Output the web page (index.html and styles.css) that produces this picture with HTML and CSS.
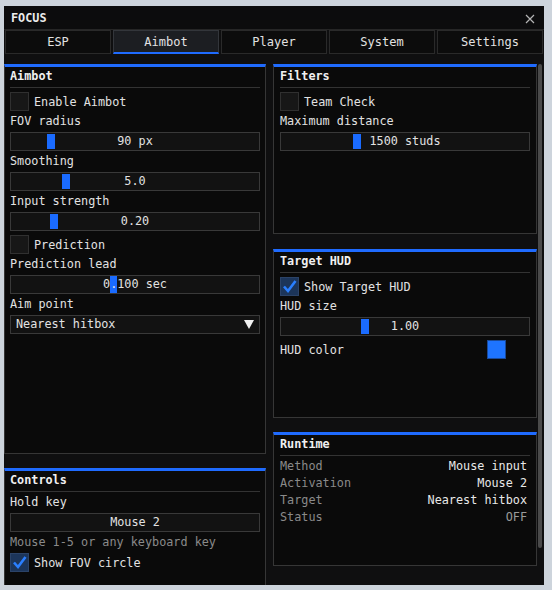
FILE: index.html
```html
<!DOCTYPE html>
<html lang="en">
<head>
  <meta charset="UTF-8">
  <title>FOCUS</title>
  <link rel="stylesheet" href="styles.css">
</head>
<body>
  <div class="window">
    <div class="titlebar">
      <span class="title">FOCUS</span>
      <svg class="close" width="10" height="10" viewBox="0 0 10 10">
        <path d="M1 1 L9 9 M9 1 L1 9" stroke="#b4b4b4" stroke-width="1.2" fill="none"/>
      </svg>
    </div>

    <nav class="tabs">
      <div class="tab">ESP</div>
      <div class="tab active">Aimbot</div>
      <div class="tab">Player</div>
      <div class="tab">System</div>
      <div class="tab">Settings</div>
    </nav>

    <div class="content">
      <div class="column left">
        <section class="panel panel-aimbot">
          <div class="panel-header">Aimbot</div>
          <div class="panel-body">
            <div class="check"><span class="box"></span>Enable Aimbot</div>
            <div class="label">FOV radius</div>
            <div class="frame slider"><span class="grab" style="left: 36px"></span>90 px</div>
            <div class="label">Smoothing</div>
            <div class="frame slider"><span class="grab" style="left: 51px"></span>5.0</div>
            <div class="label">Input strength</div>
            <div class="frame slider"><span class="grab" style="left: 39px"></span>0.20</div>
            <div class="check"><span class="box"></span>Prediction</div>
            <div class="label">Prediction lead</div>
            <div class="frame">0<span class="selected">.</span>100 sec</div>
            <div class="label">Aim point</div>
            <div class="frame combo">
              <span>Nearest hitbox</span>
              <svg width="10" height="9" viewBox="0 0 10 9"><path d="M0 0 H10 L5 9 Z" fill="#f0f0f0"/></svg>
            </div>
          </div>
        </section>

        <section class="panel panel-controls">
          <div class="panel-header">Controls</div>
          <div class="panel-body">
            <div class="label">Hold key</div>
            <div class="frame">Mouse 2</div>
            <div class="hint">Mouse 1-5 or any keyboard key</div>
            <div class="check">
              <span class="box on">
                <svg width="17" height="17" viewBox="0 0 17 17"><path d="M3 8.5 L7 13 L14.5 3" stroke="#2a7fff" stroke-width="2.6" fill="none"/></svg>
              </span>Show FOV circle
            </div>
          </div>
        </section>
      </div>

      <div class="column right">
        <section class="panel panel-filters">
          <div class="panel-header">Filters</div>
          <div class="panel-body">
            <div class="check"><span class="box"></span>Team Check</div>
            <div class="label">Maximum distance</div>
            <div class="frame slider"><span class="grab" style="left: 72px"></span>1500 studs</div>
          </div>
        </section>

        <section class="panel panel-hud">
          <div class="panel-header">Target HUD</div>
          <div class="panel-body">
            <div class="check">
              <span class="box on">
                <svg width="17" height="17" viewBox="0 0 17 17"><path d="M3 8.5 L7 13 L14.5 3" stroke="#2a7fff" stroke-width="2.6" fill="none"/></svg>
              </span>Show Target HUD
            </div>
            <div class="label">HUD size</div>
            <div class="frame slider"><span class="grab" style="left: 80px"></span>1.00</div>
            <div class="color-row">
              <span>HUD color</span>
              <span class="swatch"></span>
            </div>
          </div>
        </section>

        <section class="panel panel-runtime">
          <div class="panel-header">Runtime</div>
          <div class="panel-body runtime">
            <div class="stat"><span class="key">Method</span><span class="value">Mouse input</span></div>
            <div class="stat"><span class="key">Activation</span><span class="value">Mouse 2</span></div>
            <div class="stat"><span class="key">Target</span><span class="value">Nearest hitbox</span></div>
            <div class="stat"><span class="key">Status</span><span class="value off">OFF</span></div>
          </div>
        </section>
      </div>

      <div class="scrollbar"><div class="thumb"></div></div>
    </div>
  </div>
</body>
</html>
```

FILE: styles.css
```css
body {
  margin: 0;
  padding: 6px 0 0 4px;
  background-color: #cdd4dc;
  font-family: "DejaVu Sans Mono", "Liberation Mono", monospace;
  font-size: 11.8px;
  color: #e2e2e2;
}
.window {
  width: 540px;
  height: 579px;
  background-color: #0f0f10;
  overflow: hidden;
}
.titlebar {
  height: 23px;
  border-bottom: 1px solid #262626;
  background-color: #0c0c0d;
  display: flex;
  align-items: center;
  justify-content: space-between;
  padding: 0 9px 0 7px;
}
.title {
  font-weight: bold;
  color: #ececec;
}
.close {
  margin-top: 3px;
}
.tabs {
  display: grid;
  grid-template-columns: repeat(5, 1fr);
  gap: 2px;
  padding: 0 1px;
  height: 24px;
}
.tab {
  box-sizing: border-box;
  border: 1px solid #2a2a2a;
  background-color: #0c0c0c;
  display: flex;
  align-items: center;
  justify-content: center;
  font-size: 12px;
}
.tab.active {
  background-color: #1c1e22;
  border-color: #33363b;
  border-bottom: 2px solid #1f6bff;
  padding-top: 1px;
}
.content {
  display: flex;
  align-items: flex-start;
  height: 521px;
  padding-top: 10px;
  overflow: hidden;
}
.column {
  display: flex;
  flex-direction: column;
}
.column.left {
  width: 262px;
  margin-right: 7px;
}
.column.right {
  width: 264px;
}
.panel {
  box-sizing: border-box;
  flex-shrink: 0;
  background-color: #0a0a0a;
  border: 1px solid #363636;
  border-top: 3px solid #1f6bff;
  padding: 0 5px;
}
.column.right .panel {
  padding: 0 6px;
}
.panel-aimbot { height: 390px; }
.panel-controls { height: 150px; margin-top: 14px; }
.panel-filters { height: 170px; }
.panel-hud { height: 169px; margin-top: 15px; }
.panel-runtime { height: 134px; margin-top: 14px; }

.panel-header {
  padding: 3px 0 4px;
  line-height: 13px;
  font-weight: bold;
  color: #f0f0f0;
  border-bottom: 1px solid #333;
}
.panel-body {
  display: flex;
  flex-direction: column;
  gap: 4px;
  padding-top: 4px;
}
.label,
.hint {
  line-height: 13px;
}
.hint {
  color: #8a8a8a;
}
.check {
  height: 19px;
  display: flex;
  align-items: center;
  gap: 5px;
}
.box {
  box-sizing: border-box;
  width: 19px;
  height: 19px;
  border: 1px solid #303030;
  background-color: #171717;
  display: flex;
  align-items: center;
  justify-content: center;
}
.box.on {
  background-color: #1c355a;
  border-color: #2b4368;
}
.frame {
  position: relative;
  box-sizing: border-box;
  height: 19px;
  border: 1px solid #393939;
  background-color: #121212;
  display: flex;
  align-items: center;
  justify-content: center;
  line-height: 17px;
}
.grab {
  position: absolute;
  top: 1px;
  width: 8px;
  height: 15px;
  background-color: #1a6bff;
}
.selected {
  background-color: #1a6bff;
  line-height: 17px;
}
.combo {
  justify-content: space-between;
  padding: 0 5px;
}
.color-row {
  height: 19px;
  display: flex;
  align-items: center;
  justify-content: space-between;
}
.swatch {
  box-sizing: border-box;
  width: 19px;
  height: 19px;
  margin-right: 24px;
  background-color: #1e74ff;
  border: 1px solid #1a4a99;
}
.runtime .stat {
  display: flex;
  justify-content: space-between;
  line-height: 13px;
  padding-right: 3px;
}
.key {
  color: #8a8a8a;
}
.value {
  color: #e8e8e8;
}
.value.off {
  color: #9a9a9a;
}
.scrollbar {
  margin-left: 1px;
  width: 4px;
}
.thumb {
  height: 484px;
  border-radius: 2px;
  background-color: #4a4a4a;
}
```
